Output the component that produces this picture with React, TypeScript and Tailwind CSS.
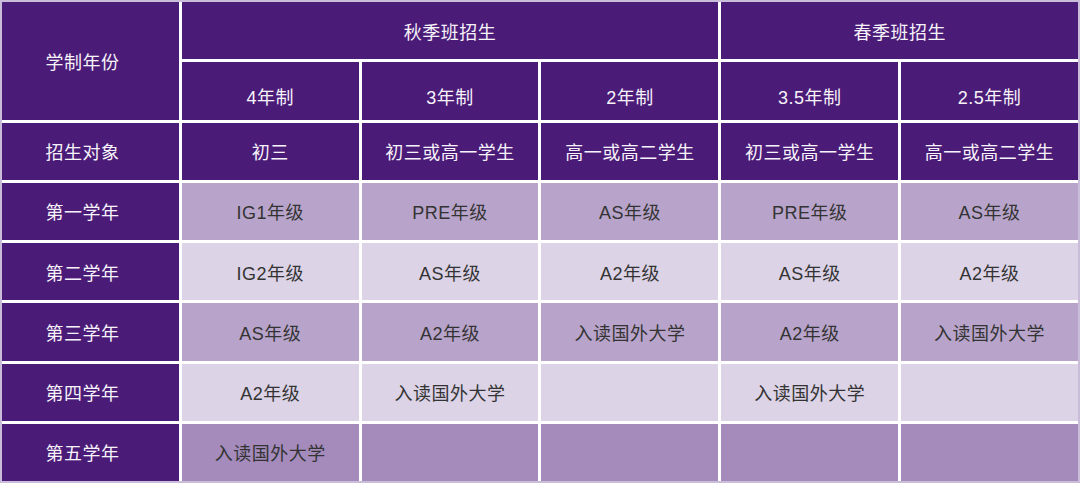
const base = "flex items-center justify-center pt-[5px]"
const dark = `${base} bg-[#4b1b78] text-[#f7f3fa]`
const mid = `${base} bg-[#b8a4ca] text-[#333333]`
const light = `${base} bg-[#dcd3e6] text-[#333333]`
const deep = `${base} bg-[#a48bbc] text-[#333333]`
const side = "pr-[16px]"

const rows: { label: string; tone: string; cells: string[] }[] = [
  { label: "第一学年", tone: mid, cells: ["IG1年级", "PRE年级", "AS年级", "PRE年级", "AS年级"] },
  { label: "第二学年", tone: light, cells: ["IG2年级", "AS年级", "A2年级", "AS年级", "A2年级"] },
  { label: "第三学年", tone: mid, cells: ["AS年级", "A2年级", "入读国外大学", "A2年级", "入读国外大学"] },
  { label: "第四学年", tone: light, cells: ["A2年级", "入读国外大学", "", "入读国外大学", ""] },
  { label: "第五学年", tone: deep, cells: ["入读国外大学", "", "", "", ""] },
]

export default function App() {
  return (
    <div
      className="h-[483px] w-[1080px] border-2 border-[#c9bdd9] bg-white text-[18px] tracking-[0.5px]"
      style={{ fontFamily: '"Liberation Sans", "Noto Sans CJK SC", sans-serif' }}
    >
      <div className="grid h-full grid-cols-6 grid-rows-8 gap-[3px]">
        <div className={`${dark} ${side} row-span-2`}>学制年份</div>
        <div className={`${dark} col-span-3`}>秋季班招生</div>
        <div className={`${dark} col-span-2`}>春季班招生</div>

        {["4年制", "3年制", "2年制", "3.5年制", "2.5年制"].map((t) => (
          <div key={t} className={`${dark} pt-[16px]`}>{t}</div>
        ))}

        <div className={`${dark} ${side}`}>招生对象</div>
        {["初三", "初三或高一学生", "高一或高二学生", "初三或高一学生", "高一或高二学生"].map((t, i) => (
          <div key={i} className={dark}>{t}</div>
        ))}

        {rows.map((row) => (
          <>
            <div key={row.label} className={`${dark} ${side}`}>{row.label}</div>
            {row.cells.map((c, i) => (
              <div key={`${row.label}-${i}`} className={row.tone}>{c}</div>
            ))}
          </>
        ))}
      </div>
    </div>
  )
}
